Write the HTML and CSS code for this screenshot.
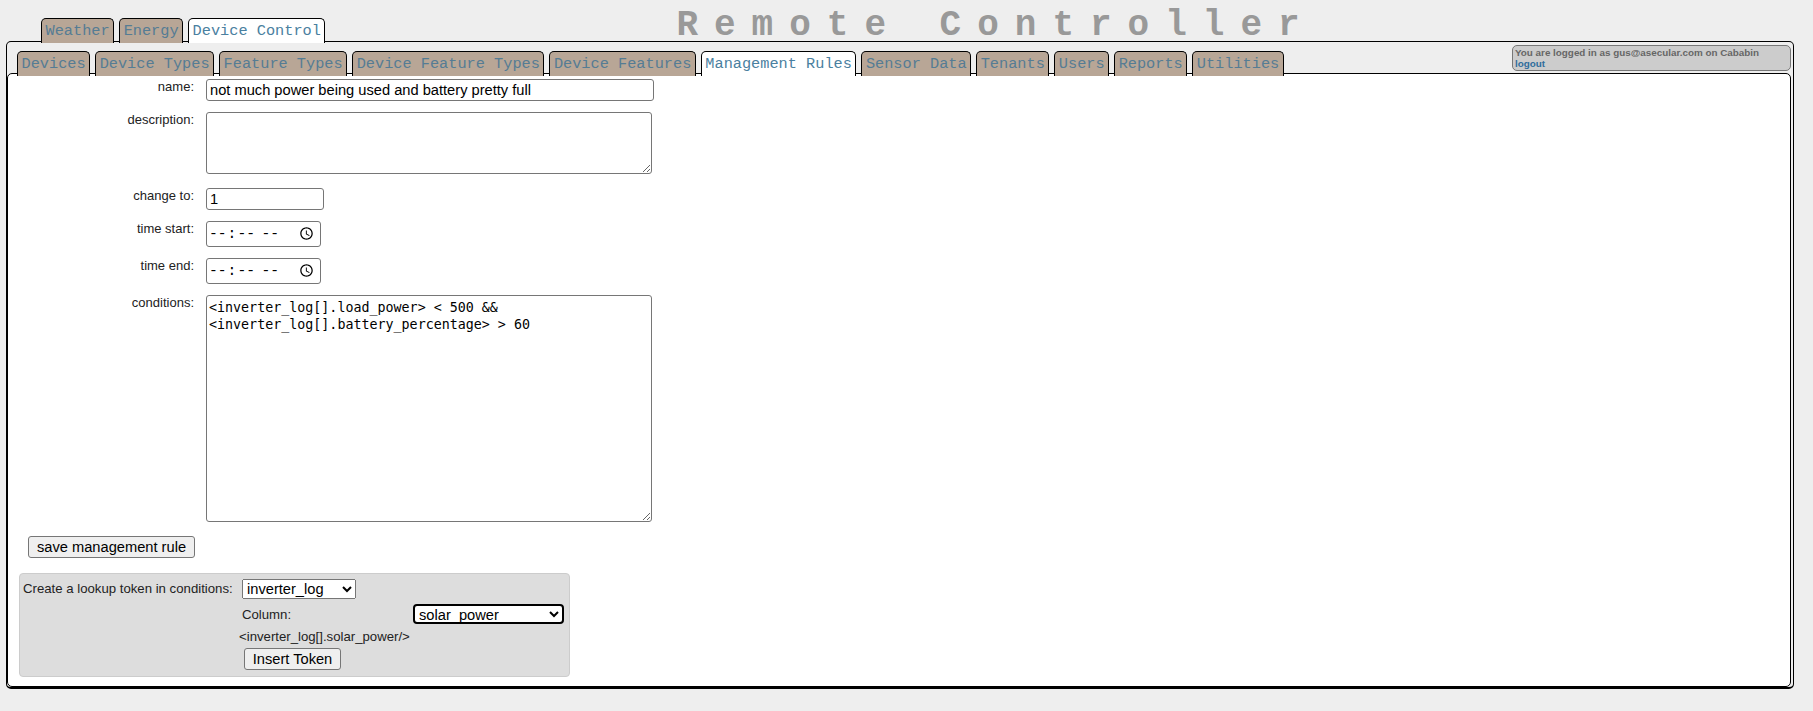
FILE: index.html
```html
<!DOCTYPE html>
<html lang="en">

<head>
    <meta charset="UTF-8">
    <title>Remote Controller</title>
    <link rel="stylesheet" href="styles.css">
</head>

<body>
    <div class="header">
        <div class="tabs top-tabs">
            <a class="tab">Weather</a>
            <a class="tab">Energy</a>
            <a class="tab active">Device Control</a>
        </div>
        <div class="site-title">Remote Controller</div>
    </div>

    <div class="outer-panel">
        <div class="sub-bar">
            <div class="tabs">
                <a class="tab">Devices</a>
                <a class="tab">Device Types</a>
                <a class="tab">Feature Types</a>
                <a class="tab">Device Feature Types</a>
                <a class="tab">Device Features</a>
                <a class="tab active">Management Rules</a>
                <a class="tab">Sensor Data</a>
                <a class="tab">Tenants</a>
                <a class="tab">Users</a>
                <a class="tab">Reports</a>
                <a class="tab">Utilities</a>
            </div>
            <div class="login-box">
                You are logged in as gus@asecular.com on Cababin<br>
                <a class="logout">logout</a>
            </div>
        </div>

        <div class="inner-panel">
            <div class="field">
                <label>name:</label>
                <input class="input-name" type="text" value="not much power being used and battery pretty full">
            </div>
            <div class="field">
                <label>description:</label>
                <div><textarea class="text-description"></textarea></div>
            </div>
            <div class="field">
                <label>change to:</label>
                <input class="input-change" type="text" value="1">
            </div>
            <div class="field">
                <label>time start:</label>
                <input class="input-time" type="time">
            </div>
            <div class="field">
                <label>time end:</label>
                <input class="input-time" type="time">
            </div>
            <div class="field">
                <label>conditions:</label>
                <div><textarea class="text-conditions">&lt;inverter_log[].load_power&gt; &lt; 500 &amp;&amp;
&lt;inverter_log[].battery_percentage&gt; &gt; 60</textarea></div>
            </div>

            <button class="btn btn-save">save management rule</button>

            <div class="lookup">
                <div class="lookup-label">Create a lookup token in conditions:</div>
                <div class="lookup-table">
                    <select class="select-table">
                        <option>inverter_log</option>
                    </select>
                </div>
                <div class="lookup-column-label">Column:</div>
                <select class="select-column">
                    <option>solar_power</option>
                </select>
                <div class="lookup-token">&lt;inverter_log[].solar_power/&gt;</div>
                <div class="lookup-insert"><button class="btn btn-insert">Insert Token</button></div>
            </div>
        </div>
    </div>
</body>

</html>
```

FILE: styles.css
```css
body {
    margin: 0;
    background-color: #eeeeee;
    font-family: "Liberation Sans", Arial, sans-serif;
    font-size: 13px;
    color: #222;
}

.header {
    display: flex;
    height: 41px;
    padding-left: 41px;
}

.tabs {
    display: flex;
    gap: 5px;
    align-items: flex-end;
}

.top-tabs {
    position: relative;
    z-index: 2;
    height: 43px;
}

.tab {
    display: block;
    height: 25px;
    box-sizing: border-box;
    padding: 3px 3.5px 0;
    border: 1px solid #000;
    border-bottom: 0;
    border-radius: 5px 5px 0 0;
    background-color: #b8a696;
    font-family: "Liberation Mono", "Courier New", monospace;
    font-size: 15.27px;
    line-height: 19px;
    color: #557c94;
    white-space: nowrap;
}

.tab.active {
    background-color: #fff;
    color: #4a80a0;
}

.site-title {
    margin-left: 351px;
    padding-top: 7px;
    font-family: "Liberation Mono", "Courier New", monospace;
    font-size: 36px;
    font-weight: bold;
    letter-spacing: 16px;
    line-height: 37px;
    color: #999;
    white-space: nowrap;
}

.outer-panel {
    margin: 0 19px 0 6px;
    height: 648px;
    box-sizing: border-box;
    border: 1px solid #000;
    border-bottom-width: 2px;
    border-radius: 5px;
}

.sub-bar {
    display: flex;
    justify-content: space-between;
    align-items: flex-start;
    height: 31px;
    box-sizing: border-box;
    padding: 3px 2px 0 10px;
}

.sub-bar .tabs {
    position: relative;
    z-index: 1;
    height: 25px;
    margin-top: 6px;
    align-items: flex-start;
}

.login-box {
    width: 279px;
    height: 26px;
    box-sizing: border-box;
    padding: 1px 2px;
    border: 1px solid #777;
    border-radius: 5px;
    background-color: #cccccc;
    font-size: 9.85px;
    font-weight: bold;
    line-height: 11px;
    color: #666;
}

.logout {
    color: #2f6d9c;
}

.inner-panel {
    height: 614px;
    box-sizing: border-box;
    margin-right: 2px;
    padding: 5px 0 0 0;
    border: 1px solid #000;
    border-radius: 5px;
    background-color: #fff;
}

.field {
    display: flex;
    gap: 12px;
    margin-bottom: 11px;
}

.field label {
    width: 186px;
    flex: none;
    text-align: right;
}

input,
textarea,
select,
button {
    font-family: "Liberation Sans", Arial, sans-serif;
    font-size: 14.67px;
}

input,
textarea {
    box-sizing: border-box;
    margin: 0;
    padding: 1px 3px;
    border: 1px solid #767676;
    border-radius: 3px;
    background-color: #fff;
    color: #000;
}

.input-name {
    width: 448px;
    height: 22px;
}

.text-description {
    width: 446px;
    height: 62px;
}

.input-change {
    width: 118px;
    height: 22px;
}

.input-time {
    width: 115px;
    height: 26px;
    padding-left: 1px;
    font-family: "Liberation Mono", monospace;
}

.text-conditions {
    width: 446px;
    height: 227px;
    padding: 3px 2px;
    font-family: "DejaVu Sans Mono", monospace;
    font-size: 13.33px;
    line-height: 17px;
}

.btn {
    height: 22px;
    box-sizing: border-box;
    padding: 0;
    border: 1px solid #767676;
    border-radius: 3px;
    background-color: #efefef;
    color: #000;
    white-space: nowrap;
}

.btn-save {
    display: block;
    width: 167px;
    margin-left: 20px;
}

.btn-insert {
    width: 97px;
    margin-left: 5px;
}

.lookup {
    display: grid;
    grid-template-columns: 216px 174px 151px;
    grid-template-rows: 25px 26px 18px 28px;
    align-items: center;
    width: 551px;
    height: 104px;
    box-sizing: border-box;
    margin: 15px 0 0 11px;
    padding: 2px 0 0 3px;
    border: 1px solid #ccc;
    border-radius: 4px;
    background-color: #dddddd;
    font-size: 13.2px;
}

.lookup-label {
    white-space: nowrap;
}

.lookup-table {
    grid-column: 2 / 4;
}

.select-table {
    width: 114px;
    height: 20px;
    margin-left: 3px;
    display: block;
}

.lookup-column-label {
    grid-column: 2;
    padding-left: 3px;
}

.select-column {
    grid-column: 3;
    width: 151px;
    height: 20px;
    border: 2px solid #000;
    border-radius: 4px;
    background-color: #fff;
}

.lookup-token {
    grid-column: 2 / 4;
    white-space: nowrap;
}

.lookup-insert {
    grid-column: 2 / 4;
}
```
